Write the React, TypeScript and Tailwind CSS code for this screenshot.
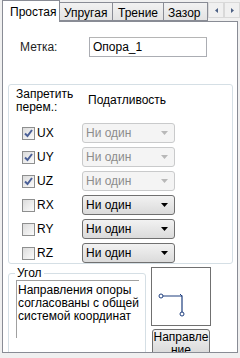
import React from "react";

const font = { fontFamily: '"Liberation Sans", Arial, sans-serif' };

function Check({ checked }: { checked: boolean }) {
  return (
    <div className="w-[13px] h-[13px] border border-[#8e8f8f] bg-gradient-to-br from-[#dcdcdc] to-[#fbfbfb] flex items-center justify-center">
      {checked && (
        <svg width="11" height="11" viewBox="0 0 11 11">
          <path d="M2 5.5 L4.5 8 L9 2" stroke="#4a5f97" strokeWidth="2" fill="none" />
        </svg>
      )}
    </div>
  );
}

function Combo({ disabled }: { disabled: boolean }) {
  if (disabled) {
    return (
      <div className="w-[93px] h-[20px] border border-[#c9cacb] rounded-[3px] bg-[#f4f4f4] flex items-center pl-[3px] pr-[6px]">
        <span className="flex-1 text-[12px] text-[#8c8c8c]">Ни один</span>
        <svg width="7" height="4" viewBox="0 0 7 4">
          <path d="M0 0 H7 L3.5 4 Z" fill="#b8b8b8" />
        </svg>
      </div>
    );
  }
  return (
    <div className="w-[93px] h-[20px] border border-[#707070] rounded-[3px] bg-gradient-to-b from-[#f2f2f2] to-[#dbdbdb] flex items-center pl-[3px] pr-[6px]">
      <span className="flex-1 text-[12px] text-black">Ни один</span>
      <svg width="7" height="4" viewBox="0 0 7 4">
        <path d="M0 0 H7 L3.5 4 Z" fill="#000" />
      </svg>
    </div>
  );
}

const rows = [
  { n: "UX", c: true },
  { n: "UY", c: true },
  { n: "UZ", c: true },
  { n: "RX", c: false },
  { n: "RY", c: false },
  { n: "RZ", c: false },
];

export default function App() {
  return (
    <div style={font} className="w-[240px] h-[358px] bg-[#f0f0f0] overflow-hidden flex flex-col text-[12px] text-black leading-none">
      <div className="h-[22px] flex items-end relative z-10">
        <div className="ml-[2px] w-[58px] h-[22px] bg-white border border-b-0 border-[#898c95] flex items-start pt-[5px] pl-[7px]">
          Простая
        </div>
        <div className="w-[53px] h-[19px] mb-[1px] border border-l-0 border-[#898c95] bg-gradient-to-b from-[#f2f2f2] to-[#e3e3e3] pt-[4px] pl-[4px]">
          Упругая
        </div>
        <div className="w-[51px] h-[19px] mb-[1px] border border-l-0 border-[#898c95] bg-gradient-to-b from-[#f2f2f2] to-[#e3e3e3] pt-[4px] pl-[5px]">
          Трение
        </div>
        <div className="w-[44px] h-[19px] mb-[1px] border border-l-0 border-[#898c95] bg-gradient-to-b from-[#f2f2f2] to-[#e3e3e3] pt-[4px] pl-[4px]">
          Зазор
        </div>
        <div className="self-start mt-[2px] flex">
          <div className="w-[16px] h-[16px] border border-[#d9d9d9] bg-[#f0f0f0] flex items-center justify-center">
            <svg width="3" height="5" viewBox="0 0 3 5"><path d="M3 0 V5 L0 2.5 Z" fill="#4d6185" /></svg>
          </div>
          <div className="w-[16px] h-[16px] border border-[#d9d9d9] bg-[#f0f0f0] flex items-center justify-center">
            <svg width="3" height="5" viewBox="0 0 3 5"><path d="M0 0 V5 L3 2.5 Z" fill="#4d6185" /></svg>
          </div>
        </div>
      </div>
      <div className="mx-[2px] -mt-px h-[332px] bg-white border border-[#898c95] flex flex-col overflow-hidden">
        <div className="flex items-center mt-[15px] ml-[17px] h-[20px]">
          <span className="w-[69px] text-[#1e1e1e]">Метка:</span>
          <div className="w-[118px] h-[20px] border border-[#abadb3] border-t-[#b5b5b5] flex items-center pl-[3px]">Опора_1</div>
        </div>
        <div className="mt-[27px] ml-[5px] w-[225px] h-[181px] border border-[#d5dfe5] rounded-[3px] flex flex-col">
          <div className="flex mt-[3px] ml-[7px]">
            <div className="w-[72px] leading-[13px]">Запретить<br />перем.:</div>
            <div className="mt-[6px]">Податливость</div>
          </div>
          <div className="flex flex-col mt-[9px] gap-[4px]">
            {rows.map((r) => (
              <div key={r.n} className="flex items-center h-[20px]">
                <div className="ml-[13px]"><Check checked={r.c} /></div>
                <span className="ml-[2px] w-[45px]">{r.n}</span>
                <Combo disabled={r.c} />
              </div>
            ))}
          </div>
        </div>
        <div className="flex mt-[3px] ml-[5px]">
          <div className="relative w-[138px] h-[82px] pt-[6px]">
            <div className="w-full h-[82px] border border-[#d5dfe5] rounded-[3px] pt-[6px] pl-[7px]">
              <div className="w-[123px] h-[58px] border-t border-l border-[#a0a0a0] pl-[1px] pt-[3px] leading-[13px] text-[12px]">
                Направления опоры<br />согласованы с общей<br />системой координат
              </div>
            </div>
            <span className="absolute left-[7px] top-0 bg-white px-[2px] leading-[12px]">Угол</span>
          </div>
          <div className="ml-[5px] flex flex-col">
            <div className="w-[60px] h-[59px] border border-[#707070] bg-white">
              <svg width="58" height="57" viewBox="0 0 58 57">
                <path d="M10 28 H30 V45" stroke="#1f3f7f" strokeWidth="1.2" fill="none" />
                <circle cx="9" cy="28" r="2" fill="white" stroke="#1f3f7f" strokeWidth="1" />
                <circle cx="30" cy="46" r="2" fill="white" stroke="#1f3f7f" strokeWidth="1" />
                <path d="M28 26 L30 28" stroke="#1f3f7f" strokeWidth="1" />
              </svg>
            </div>
            <div className="mt-[3px] ml-[1px] w-[58px] h-[30px] border border-[#707070] rounded-[3px] bg-gradient-to-b from-[#f2f2f2] to-[#d5d5d5] text-center leading-[13px] pt-[1px]">
              Направле<br />ние
            </div>
          </div>
        </div>
      </div>
    </div>
  );
}
